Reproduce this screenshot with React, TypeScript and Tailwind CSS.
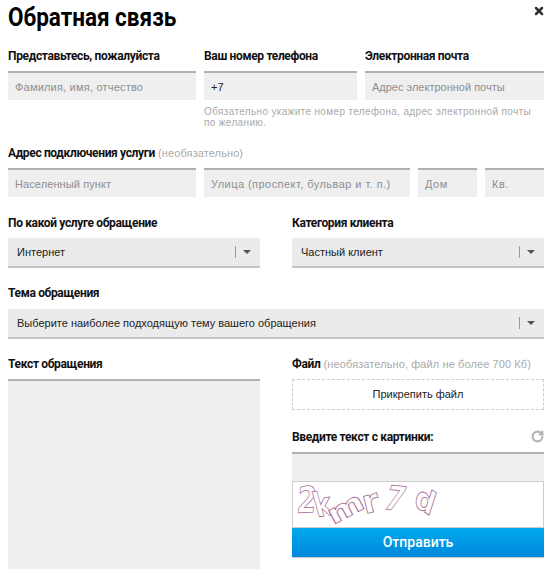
import { RotateCw, X } from "lucide-react";

const bodyFont = "font-['Liberation_Sans',Arial,sans-serif]";
const headFont = "font-['Roboto',sans-serif]";

function Label({ children, hint }: { children: string; hint?: string }) {
  return (
    <div className={`h-4 leading-4 whitespace-nowrap ${bodyFont}`}>
      <span className={`text-[12px] font-bold tracking-[-0.35px] text-[#111] ${headFont}`}>{children}</span>
      {hint && <span className="text-[11px] tracking-[0.1px] text-[#aaa]"> {hint}</span>}
    </div>
  );
}

function Field({ placeholder, value, className }: { placeholder?: string; value?: string; className: string }) {
  return (
    <input
      readOnly
      placeholder={placeholder}
      value={value ?? ""}
      className={`h-[29px] border-t-2 border-[#b0b0b0] bg-[#efefef] px-[7px] text-[11px] text-[#222] outline-none placeholder:text-[#8e8e8e] ${bodyFont} ${className}`}
    />
  );
}

function Select({ text, className }: { text: string; className: string }) {
  return (
    <div className={`flex h-[30px] items-center border-b-2 border-[#c4c4c4] bg-[#ebebeb] pl-[9px] pr-[9px] text-[11px] text-[#222] ${bodyFont} ${className}`}>
      <span className="flex-1">{text}</span>
      <span className="mr-[7px] h-[12px] w-px bg-[#999]" />
      <span className="h-0 w-0 border-x-4 border-t-4 border-x-transparent border-t-[#555]" />
    </div>
  );
}

// captcha picture: outlined letters, each one bent on its own
function Captcha() {
  const letters = [
    { c: "2", s: 36, t: "translate(3 31) rotate(-3) skewX(-8) scale(0.78 1)" },
    { c: "k", s: 34, t: "translate(24 35) rotate(-6) skewX(10) scale(0.8 1)" },
    { c: "m", s: 27, t: "translate(40 43) rotate(-28) scale(1.35 1)" },
    { c: "r", s: 32, t: "translate(72 32) rotate(-14) scale(1.05 1)" },
    { c: "7", s: 34, t: "translate(89 27) rotate(6) skewX(-12) scale(0.8 1)" },
    { c: "d", s: 30, t: "translate(120 23) rotate(32) skewX(14)" },
  ];
  return (
    <svg viewBox="0 0 250 45" className="block h-[45px] w-full overflow-hidden">
      {letters.map((l) => (
        <text
          key={l.c}
          transform={l.t}
          fontSize={l.s}
          fontWeight="bold"
          fontFamily="DejaVu Sans, sans-serif"
          fill="#fff"
          stroke="#a86a96"
          strokeWidth="0.8"
        >
          {l.c}
        </text>
      ))}
    </svg>
  );
}

export default function App() {
  return (
    <div className="relative h-[576px] w-[553px] overflow-hidden bg-white pl-2 pr-[9px]">
      <X className="absolute right-[8px] top-[5px] h-[12px] w-[12px] text-[#333]" strokeWidth={5} />

      <h1 className={`h-[47px] origin-left scale-x-[0.9] pt-[1px] text-[25px] font-bold leading-[34px] text-black ${headFont}`}>Обратная связь</h1>

      {/* contacts */}
      <div className="flex gap-2">
        <div className="w-[188px]">
          <Label>Представьтесь, пожалуйста</Label>
          <Field className="mt-2 w-full tracking-[0.2px]" placeholder="Фамилия, имя, отчество" />
        </div>
        <div className="w-[153px]">
          <Label>Ваш номер телефона</Label>
          <Field className="mt-2 w-full" value="+7" />
        </div>
        <div className="w-[179px]">
          <Label>Электронная почта</Label>
          <Field className="mt-2 w-full" placeholder="Адрес электронной почты" />
        </div>
      </div>
      <p className={`ml-[196px] mt-[6px] h-[38px] text-[10px] leading-[11px] tracking-[0.35px] text-[#aaa] ${bodyFont}`}>
        Обязательно укажите номер телефона, адрес электронной почты по желанию.
      </p>

      {/* address */}
      <Label hint="(необязательно)">Адрес подключения услуги</Label>
      <div className="mt-2 flex gap-2">
        <Field className="w-[188px] tracking-[0.1px]" placeholder="Населенный пункт" />
        <Field className="w-[206px] tracking-[0.45px]" placeholder="Улица (проспект, бульвар и т. п.)" />
        <Field className="w-[59px] tracking-[0.5px]" placeholder="Дом" />
        <Field className="w-[59px] tracking-[0.5px]" placeholder="Кв." />
      </div>

      {/* selects */}
      <div className="mt-[17px] flex gap-8">
        <div className="w-[252px]">
          <Label>По какой услуге обращение</Label>
          <Select className="mt-2" text="Интернет" />
        </div>
        <div className="w-[252px]">
          <Label>Категория клиента</Label>
          <Select className="mt-2" text="Частный клиент" />
        </div>
      </div>

      <div className="mt-4">
        <Label>Тема обращения</Label>
        <Select className="mt-[9px]" text="Выберите наиболее подходящую тему вашего обращения" />
      </div>

      {/* message + file */}
      <div className="mt-4 flex gap-8">
        <div className="w-[252px]">
          <Label>Текст обращения</Label>
          <div className="mt-2 h-[190px] border-t-2 border-[#b0b0b0] bg-[#efefef]" />
        </div>
        <div className="w-[252px]">
          <Label hint="(необязательно, файл не более 700 Кб)">Файл</Label>
          <div className={`mt-2 flex h-[31px] items-center justify-center border border-dashed border-[#ccc] text-[11px] text-[#222] ${bodyFont}`}>
            Прикрепить файл
          </div>
          <div className="mt-[18px] flex items-center justify-between">
            <Label>Введите текст с картинки:</Label>
            <RotateCw className="h-[13px] w-[13px] text-[#b5b5b5]" strokeWidth={4} />
          </div>
          <Field className="mt-2 w-full" />
          <div className="border border-[#ccc] bg-white">
            <Captcha />
          </div>
          <button className={`block h-[30px] w-full border-b border-[#ccc] bg-gradient-to-b from-[#00a9ec] to-[#0088dd] text-[14px] font-medium text-white ${headFont}`}>
            Отправить
          </button>
        </div>
      </div>
    </div>
  );
}
